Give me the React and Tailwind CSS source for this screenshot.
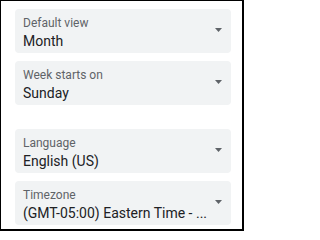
import React from "react";

function Arrow() {
  return (
    <svg width="7" height="4" viewBox="0 0 7 4" className="block">
      <path d="M0 0 L7 0 L3.5 4 Z" fill="#5f6368" />
    </svg>
  );
}

function Field({ label, value }) {
  return (
    <div className="flex h-[44px] w-[216px] items-start justify-between rounded-[4px] bg-[#f1f3f4] pl-[8px] pr-[9px] pt-[6px]">
      <div className="flex min-w-0 flex-col">
        <div className="text-[12px] leading-[16px] text-[#5f6368]">{label}</div>
        <div className="whitespace-nowrap text-[14px] leading-[20px] text-[#202124]">{value}</div>
      </div>
      <div className="mt-[13px] shrink-0">
        <Arrow />
      </div>
    </div>
  );
}

export default function App() {
  return (
    <div
      className="h-[231px] w-[244px] border-l border-t border-r-2 border-b-2 border-black bg-white pl-[14px] pt-[8px]"
      style={{ fontFamily: "Roboto, 'Liberation Sans', sans-serif" }}
    >
      <div className="flex flex-col gap-[8px]">
        <Field label="Default view" value="Month" />
        <Field label="Week starts on" value="Sunday" />
      </div>
      <div className="mt-[24px] flex flex-col gap-[8px]">
        <Field label="Language" value="English (US)" />
        <Field label="Timezone" value="(GMT-05:00) Eastern Time - ..." />
      </div>
    </div>
  );
}
